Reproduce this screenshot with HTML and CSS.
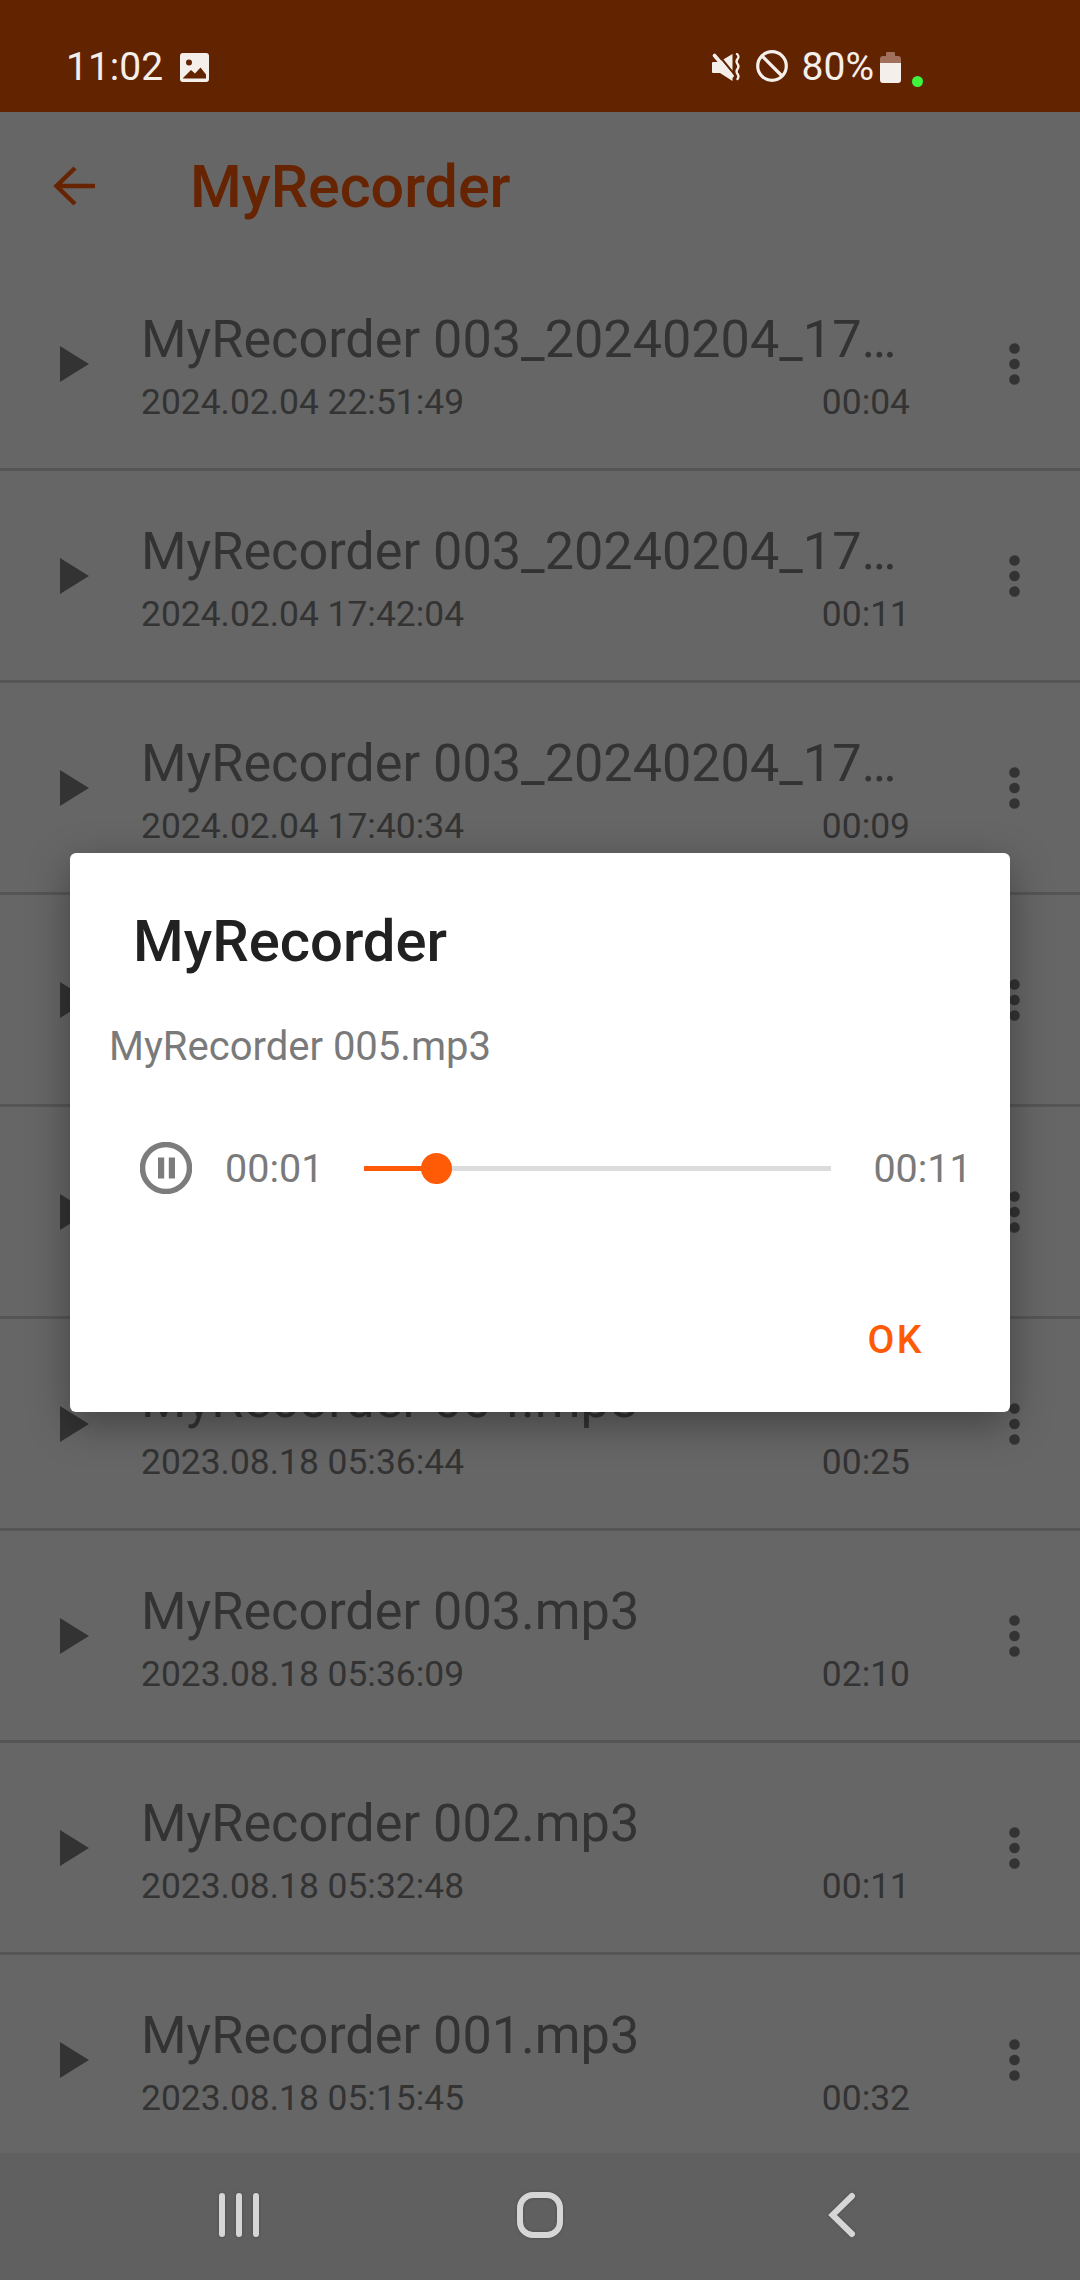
FILE: index.html
```html
<!DOCTYPE html>
<html lang="en">
<head>
<meta charset="utf-8">
<title>MyRecorder</title>
<link rel="stylesheet" href="styles.css">
</head>
<body>
<div class="screen">
  <header class="status">
    <span class="status-time">11:02</span>
    <svg class="ic-image" viewBox="0 0 29 29"><path fill="#f5efec" fill-rule="evenodd" d="M3 0h23a3 3 0 0 1 3 3v23a3 3 0 0 1-3 3H3a3 3 0 0 1-3-3V3a3 3 0 0 1 3-3zM9 6.500a3 3 0 1 0 0 6 3 3 0 0 0 0-6zM3 25.500h23v-4l-5.500-7-5.500 6-4-3.500-8 8z"/></svg>
    <div class="status-right">
      <svg class="ic-mute" viewBox="0 0 29 29"><path fill="#f5efec" d="M1 9h6L20.500 1v27L8 20H1a1 1 0 0 1-1-1v-9a1 1 0 0 1 1-1z"/><path stroke="#622300" stroke-width="2" d="M5 0l17 21"/><path stroke="#f5efec" stroke-width="3.600" stroke-linecap="round" d="M2.500 2.500L20 23"/><path fill="none" stroke="#f5efec" stroke-width="2.400" stroke-linecap="round" stroke-linejoin="round" d="M25 1c2 2 2 3 .500 5s-1.500 3 0 5 1.500 3 0 5-1.500 3 0 5 1.500 3 0 5"/></svg>
      <svg class="ic-block" viewBox="0 0 32 32"><circle cx="16" cy="16" r="14.300" fill="none" stroke="#f5efec" stroke-width="3.200"/><path stroke="#f5efec" stroke-width="3.200" d="M6 6l20 20"/></svg>
      <span class="status-pct">80%</span>
      <svg class="ic-battery" viewBox="0 0 21 31"><path fill="#a0705c" d="M7 0h7a1 1 0 0 1 1 1v3h3a3 3 0 0 1 3 3v6H0V7a3 3 0 0 1 3-3h3V1a1 1 0 0 1 1-1z"/><path fill="#f5efec" d="M0 11h21v17a3 3 0 0 1-3 3H3a3 3 0 0 1-3-3z"/></svg>
      <span class="status-dot"></span>
    </div>
  </header>

  <main class="main">
    <div class="appbar">
      <svg class="ic-back" viewBox="0 0 42 40"><path fill="none" stroke="#ff5a06" stroke-width="4.500" d="M42 20H4M22 2L3.500 20 22 38"/></svg>
      <h1 class="app-title">MyRecorder</h1>
    </div>

    <ul class="list">
      <li class="row">
        <svg class="ic-play" viewBox="0 0 29 36"><path d="M0 0l29 18L0 36z"/></svg>
        <div class="row-body">
          <div class="row-title">MyRecorder 003_20240204_174512.mp3</div>
          <div class="row-meta"><span>2024.02.04 22:51:49</span><span>00:04</span></div>
        </div>
        <svg class="ic-more" viewBox="0 0 11 42"><circle cx="5.500" cy="5.500" r="5.300"/><circle cx="5.500" cy="21" r="5.300"/><circle cx="5.500" cy="36.500" r="5.300"/></svg>
      </li>
      <li class="row">
        <svg class="ic-play" viewBox="0 0 29 36"><path d="M0 0l29 18L0 36z"/></svg>
        <div class="row-body">
          <div class="row-title">MyRecorder 003_20240204_174204.mp3</div>
          <div class="row-meta"><span>2024.02.04 17:42:04</span><span>00:11</span></div>
        </div>
        <svg class="ic-more" viewBox="0 0 11 42"><circle cx="5.500" cy="5.500" r="5.300"/><circle cx="5.500" cy="21" r="5.300"/><circle cx="5.500" cy="36.500" r="5.300"/></svg>
      </li>
      <li class="row">
        <svg class="ic-play" viewBox="0 0 29 36"><path d="M0 0l29 18L0 36z"/></svg>
        <div class="row-body">
          <div class="row-title">MyRecorder 003_20240204_174034.mp3</div>
          <div class="row-meta"><span>2024.02.04 17:40:34</span><span>00:09</span></div>
        </div>
        <svg class="ic-more" viewBox="0 0 11 42"><circle cx="5.500" cy="5.500" r="5.300"/><circle cx="5.500" cy="21" r="5.300"/><circle cx="5.500" cy="36.500" r="5.300"/></svg>
      </li>
      <li class="row">
        <svg class="ic-play" viewBox="0 0 29 36"><path d="M0 0l29 18L0 36z"/></svg>
        <div class="row-body">
          <div class="row-title">MyRecorder 006.mp3</div>
          <div class="row-meta"><span>2023.08.18 05:38:20</span><span>00:14</span></div>
        </div>
        <svg class="ic-more" viewBox="0 0 11 42"><circle cx="5.500" cy="5.500" r="5.300"/><circle cx="5.500" cy="21" r="5.300"/><circle cx="5.500" cy="36.500" r="5.300"/></svg>
      </li>
      <li class="row">
        <svg class="ic-play" viewBox="0 0 29 36"><path d="M0 0l29 18L0 36z"/></svg>
        <div class="row-body">
          <div class="row-title">MyRecorder 005.mp3</div>
          <div class="row-meta"><span>2023.08.18 05:37:02</span><span>00:11</span></div>
        </div>
        <svg class="ic-more" viewBox="0 0 11 42"><circle cx="5.500" cy="5.500" r="5.300"/><circle cx="5.500" cy="21" r="5.300"/><circle cx="5.500" cy="36.500" r="5.300"/></svg>
      </li>
      <li class="row">
        <svg class="ic-play" viewBox="0 0 29 36"><path d="M0 0l29 18L0 36z"/></svg>
        <div class="row-body">
          <div class="row-title">MyRecorder 004.mp3</div>
          <div class="row-meta"><span>2023.08.18 05:36:44</span><span>00:25</span></div>
        </div>
        <svg class="ic-more" viewBox="0 0 11 42"><circle cx="5.500" cy="5.500" r="5.300"/><circle cx="5.500" cy="21" r="5.300"/><circle cx="5.500" cy="36.500" r="5.300"/></svg>
      </li>
      <li class="row">
        <svg class="ic-play" viewBox="0 0 29 36"><path d="M0 0l29 18L0 36z"/></svg>
        <div class="row-body">
          <div class="row-title">MyRecorder 003.mp3</div>
          <div class="row-meta"><span>2023.08.18 05:36:09</span><span>02:10</span></div>
        </div>
        <svg class="ic-more" viewBox="0 0 11 42"><circle cx="5.500" cy="5.500" r="5.300"/><circle cx="5.500" cy="21" r="5.300"/><circle cx="5.500" cy="36.500" r="5.300"/></svg>
      </li>
      <li class="row">
        <svg class="ic-play" viewBox="0 0 29 36"><path d="M0 0l29 18L0 36z"/></svg>
        <div class="row-body">
          <div class="row-title">MyRecorder 002.mp3</div>
          <div class="row-meta"><span>2023.08.18 05:32:48</span><span>00:11</span></div>
        </div>
        <svg class="ic-more" viewBox="0 0 11 42"><circle cx="5.500" cy="5.500" r="5.300"/><circle cx="5.500" cy="21" r="5.300"/><circle cx="5.500" cy="36.500" r="5.300"/></svg>
      </li>
      <li class="row">
        <svg class="ic-play" viewBox="0 0 29 36"><path d="M0 0l29 18L0 36z"/></svg>
        <div class="row-body">
          <div class="row-title">MyRecorder 001.mp3</div>
          <div class="row-meta"><span>2023.08.18 05:15:45</span><span>00:32</span></div>
        </div>
        <svg class="ic-more" viewBox="0 0 11 42"><circle cx="5.500" cy="5.500" r="5.300"/><circle cx="5.500" cy="21" r="5.300"/><circle cx="5.500" cy="36.500" r="5.300"/></svg>
      </li>
    </ul>

    <div class="scrim"></div>

    <section class="dialog">
      <h2 class="dialog-title">MyRecorder</h2>
      <p class="dialog-file">MyRecorder 005.mp3</p>
      <div class="player">
        <svg class="ic-pause" viewBox="0 0 52 52"><circle cx="26" cy="26" r="23.500" fill="none" stroke="#7c7c7c" stroke-width="5.500"/><path fill="#7c7c7c" d="M18 15.500h6.200v21H18zM28.800 15.500H35v21h-6.200z"/></svg>
        <span class="player-time">00:01</span>
        <div class="track"><div class="track-fill"></div><div class="thumb"></div></div>
        <span class="player-time">00:11</span>
      </div>
      <div class="dialog-actions"><span class="ok">OK</span></div>
    </section>
  </main>

  <nav class="navbar">
    <svg class="nav-ic" viewBox="0 0 48 46"><path fill="none" stroke="#d6d6d6" stroke-width="6" stroke-linecap="round" d="M7 4v38M24 4v38M41 4v38"/></svg>
    <svg class="nav-ic" viewBox="0 0 48 46"><rect x="4" y="3" width="40" height="40" rx="13" fill="none" stroke="#d6d6d6" stroke-width="6"/></svg>
    <svg class="nav-ic" viewBox="0 0 48 46"><path fill="none" stroke="#d6d6d6" stroke-width="6" stroke-linecap="round" stroke-linejoin="miter" d="M35 4L15.500 23 35 42"/></svg>
  </nav>
</div>
</body>
</html>
```
FILE: styles.css
```css
* { box-sizing: border-box; }
html, body { margin: 0; padding: 0; }
body { width: 1080px; height: 2280px; overflow: hidden; font-family: Roboto, "Liberation Sans", sans-serif; background: #fff; }
.screen { display: flex; flex-direction: column; height: 2280px; }

.status { flex: none; height: 112px; background: #622300; color: #f5efec; display: flex; align-items: center; padding: 22px 157px 0 66px; }
.status-time { font-size: 39px; line-height: 46px; }
.ic-image { width: 29px; height: 29px; margin-left: 17px; }
.status-right { margin-left: auto; display: flex; align-items: center; }
.ic-mute { width: 29px; height: 29px; }
.ic-block { width: 32px; height: 32px; margin-left: 15px; margin-top: -2px; }
.status-pct { font-size: 39px; line-height: 46px; margin-left: 14px; }
.ic-battery { width: 21px; height: 31px; margin-left: 6px; }
.status-dot { width: 11px; height: 11px; border-radius: 50%; background: #3cf53c; margin-left: 11px; margin-top: 28px; }

.main { position: relative; flex: 1; min-height: 0; overflow: hidden; background: #fff; }
.appbar { height: 147px; display: flex; align-items: center; padding-left: 53px; }
.ic-back { width: 42px; height: 40px; }
.app-title { margin: 2px 0 0 95px; font-size: 59.200px; font-weight: 500; color: #ff5a06; line-height: 70px; }

.list { list-style: none; margin: 0; padding: 0; }
.row { height: 212px; display: flex; align-items: center; border-bottom: 3px solid #d5d5d5; }
.ic-play { flex: none; width: 29px; height: 36px; margin-left: 60px; fill: #808080; }
.row-body { flex: none; width: 769px; margin-left: 52px; padding-top: 6px; color: #808080; }
.row-title { font-size: 52.200px; line-height: 60px; white-space: nowrap; overflow: hidden; text-overflow: ellipsis; }
.row-meta { display: flex; justify-content: space-between; font-size: 35.400px; line-height: 42px; margin-top: 11px; }
.ic-more { flex: none; width: 11px; height: 42px; margin-left: 99px; fill: #808080; }

.scrim { position: absolute; inset: 0; background: rgba(0, 0, 0, .6); }
.dialog { position: absolute; left: 70px; top: 741px; width: 940px; height: 559px; background: #fff; border-radius: 6px; box-shadow: 0 12px 40px rgba(0, 0, 0, .35); display: flex; flex-direction: column; }
.dialog-title { margin: 56px 0 0 63px; font-size: 58px; font-weight: 500; line-height: 64px; color: #212121; }
.dialog-file { margin: 52px 0 0 39px; font-size: 40px; line-height: 44px; color: #7a7a7a; }
.player { display: flex; align-items: center; margin: 73px 0 0 70px; }
.ic-pause { flex: none; width: 52px; height: 52px; }
.player-time { font-size: 39.500px; line-height: 46px; margin-top: 2px; color: #7a7a7a; flex: none; }
.ic-pause + .player-time { margin-left: 33px; }
.track { position: relative; flex: none; width: 467px; height: 5px; margin: 0 42px 0 41px; background: #dcdcdc; }
.track-fill { height: 100%; width: 73px; background: #ff5a06; }
.thumb { position: absolute; left: 57px; top: -13px; width: 31px; height: 31px; border-radius: 50%; background: #ff5a06; }
.dialog-actions { margin-top: auto; padding: 0 86px 49px 0; display: flex; justify-content: flex-end; }
.ok { font-size: 39px; line-height: 46px; font-weight: 500; letter-spacing: 2.500px; color: #ff5a06; }

.navbar { flex: none; height: 127px; background: #606060; display: flex; justify-content: center; align-items: center; gap: 253px; }
.nav-ic { width: 48px; height: 46px; margin-top: -4px; filter: drop-shadow(0 0 1.500px #4a4a4a); }
```
